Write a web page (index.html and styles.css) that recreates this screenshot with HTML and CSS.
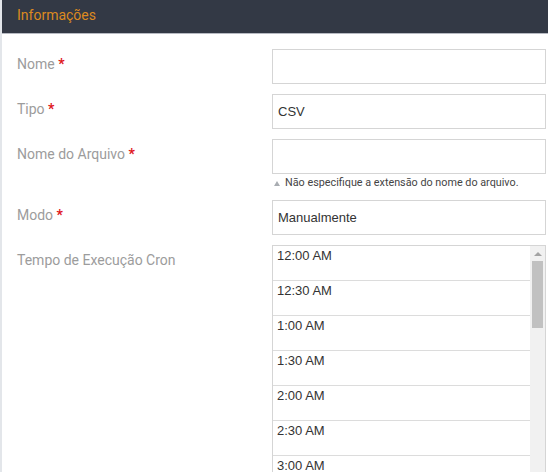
FILE: index.html
```html
<!DOCTYPE html>
<html lang="pt">
<head>
<meta charset="utf-8">
<title>Informações</title>
<link rel="stylesheet" href="styles.css">
</head>
<body>
<div class="panel">
  <div class="panel-header">Informações</div>
  <div class="panel-body">
    <div class="form-row">
      <label class="label">Nome <span class="req">*</span></label>
      <div class="field"><div class="input"></div></div>
    </div>
    <div class="form-row">
      <label class="label">Tipo <span class="req">*</span></label>
      <div class="field"><div class="input">CSV</div></div>
    </div>
    <div class="form-row">
      <label class="label">Nome do Arquivo <span class="req">*</span></label>
      <div class="field">
        <div class="input"></div>
        <div class="hint"><span class="hint-arrow"></span>Não especifique a extensão do nome do arquivo.</div>
      </div>
    </div>
    <div class="form-row">
      <label class="label">Modo <span class="req">*</span></label>
      <div class="field"><div class="input">Manualmente</div></div>
    </div>
    <div class="form-row">
      <label class="label">Tempo de Execução Cron</label>
      <div class="field">
        <div class="listbox">
          <div class="options">
            <div class="option">12:00 AM</div>
            <div class="option">12:30 AM</div>
            <div class="option">1:00 AM</div>
            <div class="option">1:30 AM</div>
            <div class="option">2:00 AM</div>
            <div class="option">2:30 AM</div>
            <div class="option">3:00 AM</div>
            <div class="option">3:30 AM</div>
          </div>
          <div class="scrollbar">
            <div class="sb-arrow"></div>
            <div class="sb-thumb"></div>
          </div>
        </div>
      </div>
    </div>
  </div>
</div>
</body>
</html>
```

FILE: styles.css
```css
html, body {
  margin: 0;
  padding: 0;
  height: 100%;
  overflow: hidden;
}
body {
  background: #e3e6ea;
  padding-left: 2px;
  font-family: Roboto, "Liberation Sans", Arial, sans-serif;
}
.panel {
  background: #fff;
  min-height: 100%;
}
.panel-header {
  height: 33px;
  line-height: 31px;
  background: #333945;
  border-bottom: 1px solid #b7bac2;
  color: #dc8a20;
  font-size: 14px;
  padding-left: 15px;
}
.panel-body {
  padding: 15px 2px 0 15px;
  display: flex;
  flex-direction: column;
  gap: 10px;
}
.form-row {
  display: grid;
  grid-template-columns: 255px 1fr;
}
.label {
  font-size: 14px;
  line-height: 20px;
  color: #9c9c9c;
  padding-top: 5px;
}
.req {
  color: #e0151b;
  font-weight: bold;
}
.field {
  display: flex;
  flex-direction: column;
}
.input {
  box-sizing: border-box;
  height: 35px;
  border: 1px solid #d5d5d5;
  padding: 0 5px;
  font-family: "Liberation Sans", Arial, sans-serif;
  font-size: 13px;
  line-height: 33px;
  color: #333;
}
.hint {
  height: 15px;
  display: flex;
  align-items: center;
  font-size: 10.8px;
  color: #444;
  padding-top: 1px;
}
.hint-arrow {
  width: 0;
  height: 0;
  border-left: 3.5px solid transparent;
  border-right: 3.5px solid transparent;
  border-bottom: 5px solid #a9adb2;
  margin: 2px 5px 0 2px;
}
.listbox {
  display: flex;
  border: 1px solid #d5d5d5;
  height: 320px;
  overflow: hidden;
}
.options {
  flex: 1;
}
.option {
  box-sizing: border-box;
  height: 35px;
  border-bottom: 1px solid #dcdcdc;
  padding: 2px 4px 0;
  font-family: "Liberation Sans", Arial, sans-serif;
  font-size: 13px;
  line-height: 15px;
  color: #333;
}
.scrollbar {
  width: 15px;
  background: #f1f1f1;
  display: flex;
  flex-direction: column;
  align-items: center;
}
.sb-arrow {
  width: 0;
  height: 0;
  border-left: 4px solid transparent;
  border-right: 4px solid transparent;
  border-bottom: 4px solid #a3a3a3;
  margin-top: 6px;
}
.sb-thumb {
  width: 11px;
  height: 67px;
  background: #c1c1c1;
  margin-top: 5px;
}
```
